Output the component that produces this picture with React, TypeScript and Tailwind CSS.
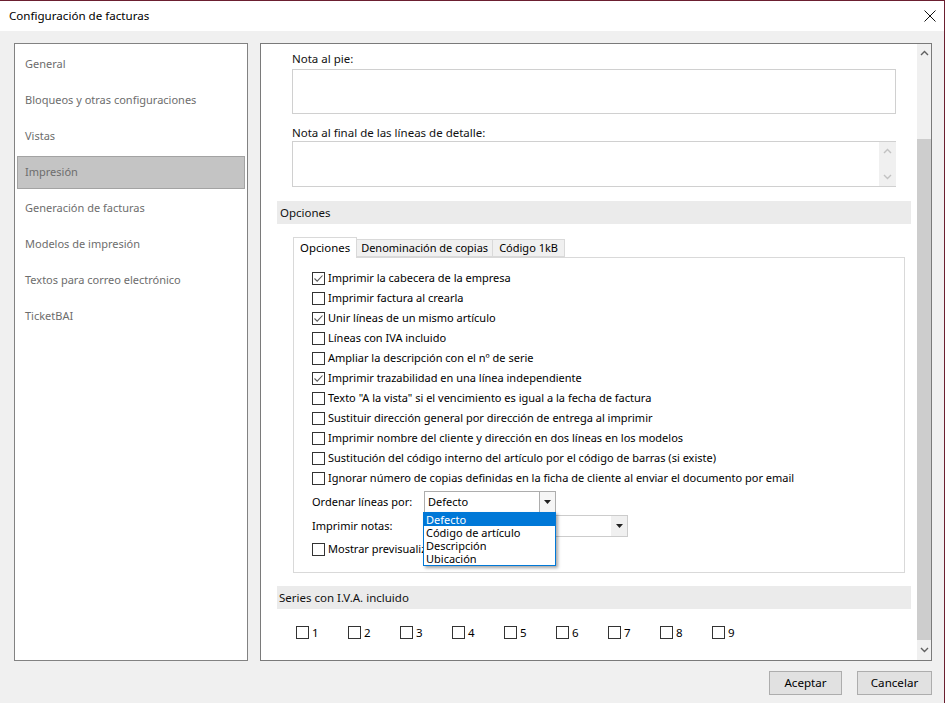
import React from 'react';

const font = { fontFamily: '"Noto Sans", "Liberation Sans", sans-serif' };

const menuItems = [
  'General',
  'Bloqueos y otras configuraciones',
  'Vistas',
  'Impresión',
  'Generación de facturas',
  'Modelos de impresión',
  'Textos para correo electrónico',
  'TicketBAI',
];

const options: [string, boolean][] = [
  ['Imprimir la cabecera de la empresa', true],
  ['Imprimir factura al crearla', false],
  ['Unir líneas de un mismo artículo', true],
  ['Líneas con IVA incluido', false],
  ['Ampliar la descripción con el nº de serie', false],
  ['Imprimir trazabilidad en una línea independiente', true],
  ['Texto "A la vista" si el vencimiento es igual a la fecha de factura', false],
  ['Sustituir dirección general por dirección de entrega al imprimir', false],
  ['Imprimir nombre del cliente y dirección en dos líneas en los modelos', false],
  ['Sustitución del código interno del artículo por el código de barras (si existe)', false],
  ['Ignorar número de copias definidas en la ficha de cliente al enviar el documento por email', false],
];

const CheckBox: React.FC<{ checked?: boolean }> = ({ checked }) => (
  <span className="flex h-[13px] w-[13px] shrink-0 items-center justify-center border border-[#333333] bg-white">
    {checked && (
      <svg width="11" height="11" viewBox="0 0 11 11">
        <path d="M1.5 5.5 L4.2 8.2 L9.5 2.5" fill="none" stroke="#5a5a5a" strokeWidth="1.1" />
      </svg>
    )}
  </span>
);

const Chevron: React.FC<{ up?: boolean; color?: string }> = ({ up, color = '#606060' }) => (
  <svg width="9" height="6" viewBox="0 0 9 6">
    <path d={up ? 'M1 5 L4.5 1.5 L8 5' : 'M1 1 L4.5 4.5 L8 1'} fill="none" stroke={color} strokeWidth="1.4" />
  </svg>
);

const Caret = () => (
  <svg width="7" height="4" viewBox="0 0 7 4">
    <path d="M0 0 H7 L3.5 4 Z" fill="#222" />
  </svg>
);

const App: React.FC = () => {
  return (
    <div
      className="flex h-[703px] w-[945px] flex-col overflow-hidden border-t border-r border-[#6b1f30] bg-[#f0f0f0] text-[11px] text-black"
      style={font}
    >
      {/* title bar */}
      <div className="flex h-[30px] shrink-0 items-center justify-between bg-white pl-[9px] pr-[7px]">
        <span className="text-[11.6px] text-black">Configuración de facturas</span>
        <svg width="12" height="12" viewBox="0 0 12 12" className="mr-[1px]">
          <path d="M0.5 0.5 L11.5 11.5 M11.5 0.5 L0.5 11.5" stroke="#111" strokeWidth="1" />
        </svg>
      </div>

      {/* body */}
      <div className="mt-[12px] flex h-[618px] gap-[12px] pl-[14px]">
        {/* left menu */}
        <div className="flex h-[618px] w-[234px] flex-col border border-[#828282] bg-white px-[2px] pt-[4px]">
          {menuItems.map((m) => (
            <div
              key={m}
              className={
                'mb-[3px] flex h-[33px] items-center pl-[7px] text-[11px] text-[#6d6d6d] ' +
                (m === 'Impresión' ? 'border border-[#a3a3a3] bg-[#c4c4c4]' : 'border border-transparent')
              }
            >
              {m}
            </div>
          ))}
        </div>

        {/* right panel */}
        <div className="flex h-[618px] w-[672px] border border-[#7a7a7a] bg-white">
          <div className="relative flex-1 pl-[16px] pr-[6px]">
            <div className="pl-[15px] pr-[15px]">
              <div className="pt-[7px] text-[11.5px] leading-[16px] text-[#111]">Nota al pie:</div>
              <div className="mt-[2px] h-[45px] border border-[#d0d0d0]" />
              <div className="mt-[11px] text-[11.5px] leading-[16px] text-[#111]">
                Nota al final de las líneas de detalle:
              </div>
              <div className="flex h-[46px] border-y border-l border-[#d0d0d0]">
                <div className="flex-1" />
                <div className="flex w-[17px] flex-col items-center justify-between bg-[#f0f0f0] py-[6px]">
                  <Chevron up color="#c2c2c2" />
                  <Chevron color="#c2c2c2" />
                </div>
              </div>
            </div>

            {/* Opciones header */}
            <div className="mt-[14px] flex h-[23px] items-center bg-[#ebebeb] pl-[3px] text-[11.5px] text-[#111]">
              Opciones
            </div>

            {/* tabs */}
            <div className="ml-[16px] mr-[6px] mt-[13px]">
              <div className="flex items-end">
                <div className="relative z-10 -mb-[1px] flex h-[21px] items-center border-x border-t border-[#d9d9d9] bg-white px-[6px] text-[11.4px]">
                  Opciones
                </div>
                <div className="flex h-[18px] items-center border-y border-r border-[#d9d9d9] bg-[#f0f0f0] px-[4px]">
                  Denominación de copias
                </div>
                <div className="flex h-[18px] items-center border-y border-r border-[#d9d9d9] bg-[#f0f0f0] px-[6px]">
                  Código 1kB
                </div>
              </div>
              <div className="relative h-[316px] border border-[#d9d9d9] pl-[18px] pt-[10px]">
                {options.map(([label, checked]) => (
                  <div key={label} className="flex h-[20px] items-center gap-[3px]">
                    <CheckBox checked={checked} />
                    <span className="whitespace-nowrap">{label}</span>
                  </div>
                ))}
                <div className="mt-[3px] flex h-[22px] items-center">
                  <span className="w-[112px]">Ordenar líneas por:</span>
                  <div className="flex h-[22px] w-[132px] border border-[#adadad] bg-white">
                    <span className="flex flex-1 items-center pl-[3px]">Defecto</span>
                    <span className="flex w-[16px] items-center justify-center border-l border-[#adadad] bg-[#f6f6f6]">
                      <Caret />
                    </span>
                  </div>
                </div>
                <div className="mt-[2px] flex h-[22px] items-center">
                  <span className="w-[112px]">Imprimir notas:</span>
                  <div className="flex h-[22px] w-[204px] border border-[#cccccc] bg-white">
                    <span className="flex-1" />
                    <span className="flex w-[16px] items-center justify-center bg-[#f0f0f0]">
                      <Caret />
                    </span>
                  </div>
                </div>
                <div className="mt-[1px] flex h-[23px] items-center gap-[3px]">
                  <CheckBox />
                  <span className="whitespace-nowrap">Mostrar previsualización</span>
                </div>

                {/* open dropdown list */}
                <div className="absolute left-[129px] top-[254px] z-20 flex w-[133px] flex-col border border-[#0078d7] bg-white leading-[13px] shadow-[2px_2px_3px_rgba(0,0,0,0.35)]">
                  <span className="bg-[#0078d7] pl-[2px] text-white">Defecto</span>
                  <span className="pl-[2px]">Código de artículo</span>
                  <span className="pl-[2px]">Descripción</span>
                  <span className="pl-[2px]">Ubicación</span>
                </div>
              </div>
            </div>

            {/* Series header */}
            <div className="mt-[13px] flex h-[23px] items-center bg-[#ebebeb] pl-[2px] text-[11.5px] text-[#111]">
              Series con I.V.A. incluido
            </div>
            <div className="mt-[15px] flex pl-[19px]">
              {['1', '2', '3', '4', '5', '6', '7', '8', '9'].map((n) => (
                <div key={n} className="flex w-[52px] items-center gap-[3px] text-[11.5px]">
                  <CheckBox />
                  <span>{n}</span>
                </div>
              ))}
            </div>
          </div>

          {/* scrollbar */}
          <div className="flex w-[14px] flex-col bg-[#f0f0f0]">
            <div className="flex h-[18px] items-center justify-center">
              <Chevron up />
            </div>
            <div className="h-[77px]" />
            <div className="h-[501px] bg-[#cdcdcd]" />
            <div className="flex flex-1 items-center justify-center">
              <Chevron />
            </div>
          </div>
        </div>
      </div>

      {/* footer */}
      <div className="mt-[10px] flex justify-end gap-[15px] pr-[12px]">
        <button className="h-[24px] w-[73px] border border-[#adadad] bg-[#e1e1e1] text-[11.6px]">Aceptar</button>
        <button className="h-[24px] w-[75px] border border-[#adadad] bg-[#e1e1e1] text-[11.6px]">Cancelar</button>
      </div>
    </div>
  );
};

export default App;
